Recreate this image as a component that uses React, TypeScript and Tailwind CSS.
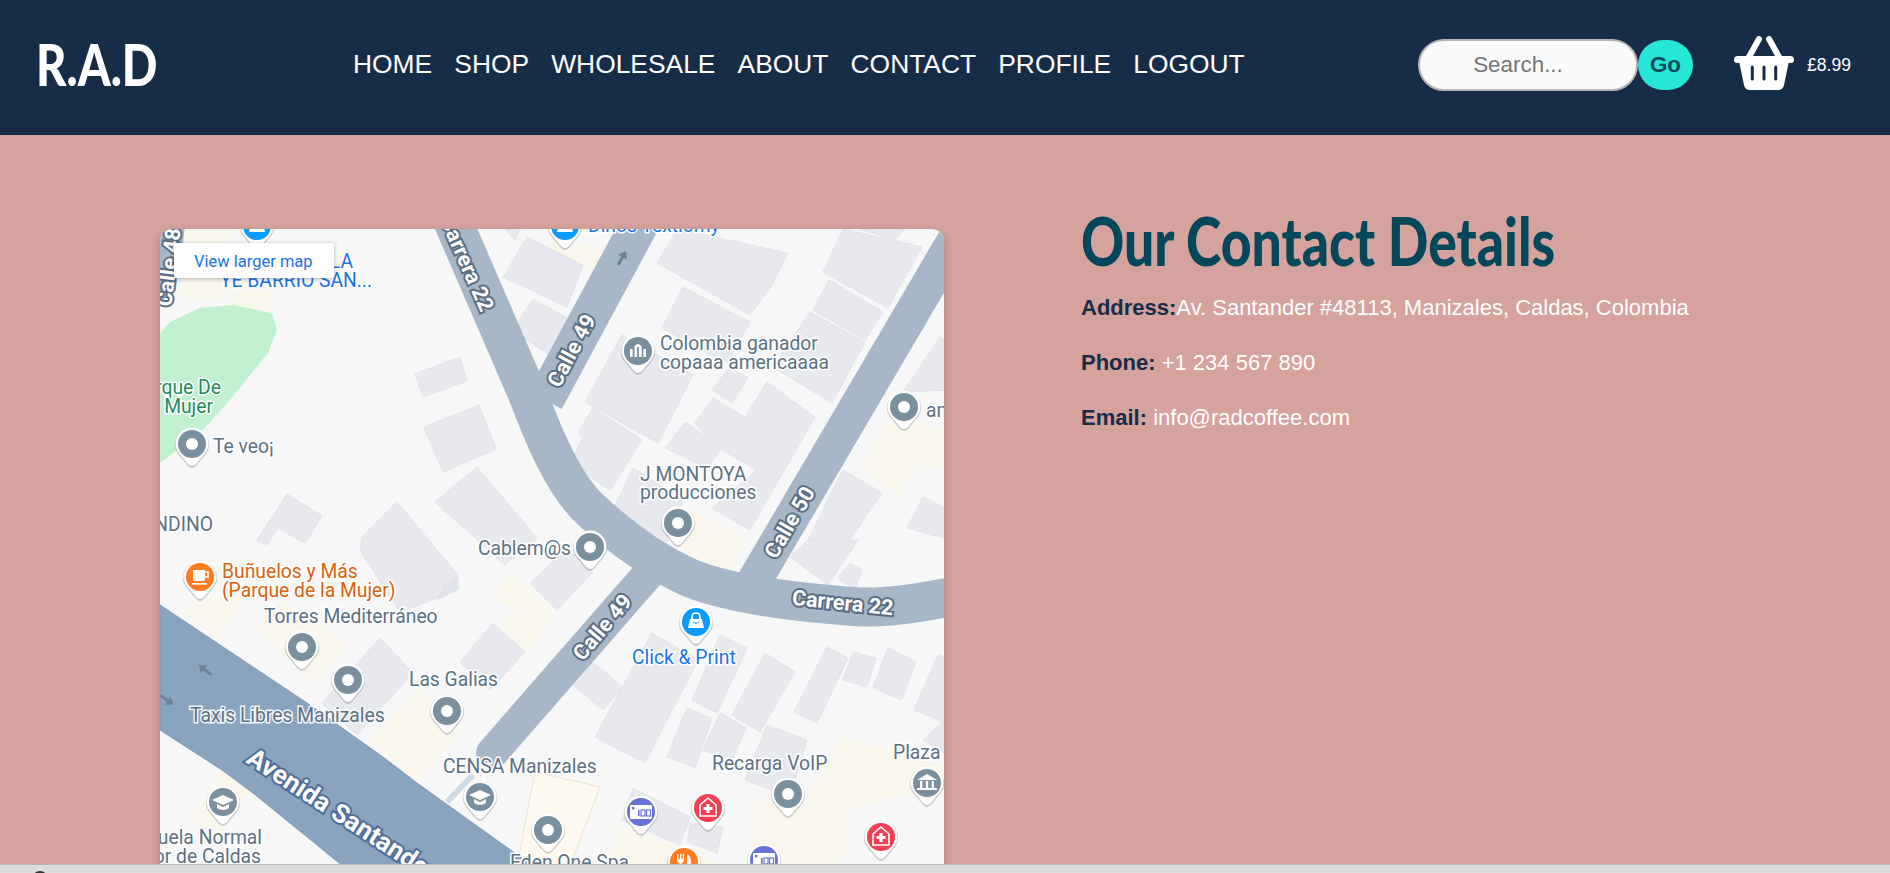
import React from "react";

const buildings: string[] = [
  "415,374 460,357 467,381 423,397",
  "424,427 479,405 496,449 443,472",
  "435,502 477,467 537,538 505,565",
  "257,540 287,494 322,516 305,543 278,528 267,545",
  "362,537 397,502 458,575 458,590 400,612 360,550",
  "503,277 527,237 583,265 567,307",
  "512,331 533,299 569,319 552,356",
  "657,263 678,229 788,253 772,285 750,315",
  "823,272 843,229 922,247 888,308",
  "662,328 683,287 750,322 727,363",
  "813,310 829,280 883,312 865,340",
  "773,367 810,312 865,342 832,403",
  "585,402 622,335 693,375 658,443",
  "712,390 730,367 748,378 732,403",
  "745,417 767,382 787,397 765,430",
  "695,423 713,398 745,417 765,430 787,397 815,417 750,530 712,508 757,470 717,447",
  "665,448 685,422 722,448 707,468",
  "578,433 593,408 642,440 610,490 570,463 583,438",
  "613,510 633,468 683,500 667,542",
  "907,528 923,497 950,510 950,540",
  "903,392 940,337 950,343 950,390",
  "803,550 843,470 882,493 843,550",
  "790,557 808,540 858,540 828,585",
  "838,578 850,563 862,570 855,590",
  "567,680 587,658 623,687 603,710",
  "595,737 652,633 698,660 645,763",
  "692,700 720,635 747,648 717,713",
  "732,715 765,653 795,672 760,732",
  "794,712 827,647 848,658 817,723",
  "843,680 853,652 876,658 867,687",
  "873,688 888,648 916,662 902,700",
  "914,710 938,655 944,657 944,722",
  "667,757 687,708 712,718 695,768",
  "703,750 720,713 746,728 732,760",
  "745,780 767,725 807,740 790,797",
  "633,788 690,817 680,845 622,820",
  "690,823 723,827 717,853 687,842",
  "923,740 944,720 944,753",
  "322,703 380,638 413,673 357,735",
  "460,662 493,623 525,652 490,690",
  "530,583 567,548 593,572 557,610",
  "505,229 520,229 515,240",
  "860,229 905,229 895,240",
];

const zones: string[] = [
  "860,470 883,427 903,417 944,433 944,460 937,470 917,463 900,495",
  "693,510 745,537 730,570 705,567 670,540",
  "550,240 612,250 602,273 550,257",
  "183,229 230,229 227,300 180,297",
  "232,290 272,290 272,315 232,316",
  "183,617 197,598 247,597 218,638",
  "255,625 283,600 348,643 313,685",
  "370,743 417,690 463,727 417,783",
  "492,597 510,573 550,607 550,623 527,652 497,623 517,610",
  "188,820 227,767 253,787 222,833",
  "617,827 643,833 720,864 610,864",
  "750,797 850,815 850,840 840,864 750,864",
  "810,793 843,737 943,767 943,797 897,795 840,812 810,807",
];

type Tone = "gray" | "green" | "orange" | "blue";
const toneClass: Record<Tone, string> = {
  gray: "fill-[#5b7183]",
  green: "fill-[#1e8a5c]",
  orange: "fill-[#d9620c]",
  blue: "fill-[#1a73e8]",
};

const labels: { t: string; x: number; y: number; tone: Tone; end?: boolean }[] = [
  { t: "Colombia ganador", x: 660, y: 350, tone: "gray" },
  { t: "copaaa americaaaa", x: 660, y: 369, tone: "gray" },
  { t: "J MONTOYA", x: 640, y: 481, tone: "gray" },
  { t: "producciones", x: 640, y: 499, tone: "gray" },
  { t: "amigos", x: 926, y: 417, tone: "gray" },
  { t: "Parque De", x: 221, y: 394, tone: "green", end: true },
  { t: "la Mujer", x: 213, y: 413, tone: "green", end: true },
  { t: "Te veo¡", x: 213, y: 453, tone: "gray" },
  { t: "ANDINO", x: 213, y: 531, tone: "gray", end: true },
  { t: "Cablem@s", x: 478, y: 555, tone: "gray" },
  { t: "Buñuelos y Más", x: 222, y: 578, tone: "orange" },
  { t: "(Parque de la Mujer)", x: 222, y: 597, tone: "orange" },
  { t: "Torres Mediterráneo", x: 264, y: 623, tone: "gray" },
  { t: "Las Galias", x: 409, y: 686, tone: "gray" },
  { t: "CENSA Manizales", x: 443, y: 773, tone: "gray" },
  { t: "Escuela Normal", x: 262, y: 844, tone: "gray", end: true },
  { t: "Superior de Caldas", x: 261, y: 863, tone: "gray", end: true },
  { t: "Eden One Spa", x: 510, y: 869, tone: "gray" },
  { t: "Click & Print", x: 632, y: 664, tone: "blue" },
  { t: "Recarga VoIP", x: 712, y: 770, tone: "gray" },
  { t: "Plaza", x: 893, y: 759, tone: "gray" },
  { t: "ESCUELA", x: 353, y: 268, tone: "blue", end: true },
  { t: "YE BARRIO SAN...", x: 220, y: 287, tone: "blue" },
  { t: "Dinos Textiomy", x: 588, y: 232, tone: "blue" },
];

const roadLabels: { t: string; x: number; y: number; a: number; anchor: "end" | "middle" }[] = [
  { t: "Carrera 22", x: 481, y: 313, a: 66, anchor: "end" },
  { t: "Calle 49", x: 578, y: 354, a: -62, anchor: "middle" },
  { t: "Calle 50", x: 796, y: 526, a: -60, anchor: "middle" },
  { t: "Calle 49", x: 608, y: 632, a: -50, anchor: "middle" },
  { t: "Carrera 22", x: 842, y: 610, a: 6, anchor: "middle" },
  { t: "Calle 48", x: 176, y: 268, a: -83, anchor: "middle" },
];

type Kind = "dot" | "museum" | "cup" | "grad" | "bank" | "bag" | "hospital" | "cash" | "food";
const pins: { x: number; y: number; kind: Kind; fill: string }[] = [
  { x: 192, y: 444, kind: "dot", fill: "#7a909e" },
  { x: 638, y: 351, kind: "museum", fill: "#7a909e" },
  { x: 904, y: 407, kind: "dot", fill: "#7a909e" },
  { x: 678, y: 523, kind: "dot", fill: "#7a909e" },
  { x: 590, y: 547, kind: "dot", fill: "#7a909e" },
  { x: 200, y: 577, kind: "cup", fill: "#ff7c1f" },
  { x: 302, y: 647, kind: "dot", fill: "#7a909e" },
  { x: 348, y: 680, kind: "dot", fill: "#7a909e" },
  { x: 447, y: 711, kind: "dot", fill: "#7a909e" },
  { x: 223, y: 802, kind: "grad", fill: "#7a909e" },
  { x: 480, y: 797, kind: "grad", fill: "#7a909e" },
  { x: 548, y: 830, kind: "dot", fill: "#7a909e" },
  { x: 696, y: 622, kind: "bag", fill: "#0a9bff" },
  { x: 788, y: 794, kind: "dot", fill: "#7a909e" },
  { x: 927, y: 783, kind: "bank", fill: "#7a909e" },
  { x: 708, y: 808, kind: "hospital", fill: "#f23f52" },
  { x: 881, y: 837, kind: "hospital", fill: "#f23f52" },
  { x: 641, y: 812, kind: "cash", fill: "#6772d6" },
  { x: 764, y: 860, kind: "cash", fill: "#6772d6" },
  { x: 684, y: 862, kind: "food", fill: "#ff7c1f" },
  { x: 257, y: 226, kind: "bag", fill: "#0a9bff" },
  { x: 565, y: 226, kind: "bag", fill: "#0a9bff" },
];

function PinIcon({ kind, fill }: { kind: Kind; fill: string }) {
  switch (kind) {
    case "dot":
      return <circle r="6" fill="#fff" />;
    case "museum":
      return (
        <g fill="#fff">
          <rect x="-8" y="-2" width="2.6" height="8" />
          <rect x="-3.5" y="-4" width="2.6" height="10" />
          <rect x="1" y="-4" width="2.6" height="10" />
          <rect x="5.4" y="-2" width="2.6" height="8" />
          <path d="M-4 -4 Q0 -10 4 -4Z" />
        </g>
      );
    case "cup":
      return (
        <g>
          <path d="M-7 -7 H5 V2 Q5 4 3 4 H-5 Q-7 4 -7 2Z" fill="#fff" />
          <path d="M5 -5 H8 V0 H5" fill="none" stroke="#fff" strokeWidth="1.6" />
          <rect x="-8" y="6" width="15" height="1.6" fill="#fff" />
        </g>
      );
    case "grad":
      return (
        <g>
          <path d="M-11 -2 L0 -7 L11 -2 L0 3Z" fill="#fff" />
          <path d="M-6 2 L0 5 L6 2 V6 Q0 10 -6 6Z" fill="#fff" />
        </g>
      );
    case "bank":
      return (
        <g fill="#fff">
          <path d="M-10 -3 L0 -9 L10 -3Z" />
          <rect x="-7" y="-2" width="2.4" height="7" />
          <rect x="-1.2" y="-2" width="2.4" height="7" />
          <rect x="4.6" y="-2" width="2.4" height="7" />
          <rect x="-10" y="5" width="20" height="2" />
        </g>
      );
    case "bag":
      return (
        <g>
          <path d="M-4 -3 V-5 Q-4 -9 0 -9 Q4 -9 4 -5 V-3" fill="none" stroke="#fff" strokeWidth="1.6" />
          <path d="M-6 -3 H6 L8 6 H-8Z" fill="#fff" />
          <path d="M-3 0 Q0 3 3 0" fill="none" stroke={fill} strokeWidth="1" />
        </g>
      );
    case "hospital":
      return (
        <g>
          <path d="M-8 -3 L0 -10 L8 -3 V8 H-8Z" fill="none" stroke="#fff" strokeWidth="1.6" />
          <path d="M-1.6 -4 H1.6 V-1 H4.5 V2 H1.6 V5 H-1.6 V2 H-4.5 V-1 H-1.6Z" fill="#fff" />
        </g>
      );
    case "cash":
      return (
        <g>
          <rect x="-11" y="-7" width="22" height="14" rx="1" fill="#fff" />
          <rect x="-9" y="-5" width="2.4" height="2.4" fill={fill} />
          <rect x="-3" y="-2" width="1.6" height="6" fill={fill} />
          <rect x="0" y="-2" width="4" height="6" fill="none" stroke={fill} strokeWidth="1.2" />
          <rect x="5.5" y="-2" width="4" height="6" fill="none" stroke={fill} strokeWidth="1.2" />
        </g>
      );
    case "food":
      return (
        <g fill="#fff">
          <path d="M-7 -8 V-2 Q-7 1 -4.5 1 V9 H-2.5 V1 Q0 1 0 -2 V-8 H-1.2 V-3 H-2.6 V-8 H-4 V-3 H-5.6 V-8Z" />
          <path d="M3 9 V-8 Q8 -5 7 2 H5 V9Z" />
        </g>
      );
  }
}

const PIN_SHAPE = "M-16.5 0 A16.5 16.5 0 1 1 16.5 0 C16.5 7 11 11 4 20 Q0 24 -4 20 C-11 11 -16.5 7 -16.5 0Z";

function Pin({ x, y, kind, fill }: { x: number; y: number; kind: Kind; fill: string }) {
  return (
    <g transform={`translate(${x} ${y})`}>
      <path d={PIN_SHAPE} fill="#4a5560" opacity="0.28" transform="translate(0 1) scale(1.04)" />
      <path d={PIN_SHAPE} fill="#fff" />
      <circle r="14" fill={fill} />
      <PinIcon kind={kind} fill={fill} />
    </g>
  );
}

function RoadArrow({ x, y, a }: { x: number; y: number; a: number }) {
  return (
    <path
      transform={`translate(${x} ${y}) rotate(${a})`}
      d="M-1.5 8 V-1 H-5 L0 -8 L5 -1 H1.5 V8Z"
      fill="#6f8398"
    />
  );
}

function MapDrawing() {
  return (
    <svg viewBox="160 229 784 640" width="784" height="640" className="block bg-[#f7f7f8] font-['Roboto',sans-serif]">
      {zones.map((p) => (
        <polygon key={p} points={p} fill="#f9f6ec" />
      ))}
      <polygon points="535,772 600,787 570,866 517,866" fill="#fdf9ef" stroke="#efe3d0" />
      <polygon
        points="160,333 170,322 200,308 233,305 272,313 277,330 268,353 230,400 200,433 160,463"
        fill="#c1f0d0"
      />
      {buildings.map((p) => (
        <polygon key={p} points={p} fill="#e8e9ee" stroke="#e2e4ea" strokeWidth="1" />
      ))}
      <polygon points="445,583 458,575 458,590 437,600" fill="#e0e3ea" />
      <g fill="none" stroke="#a7b7c8" strokeLinejoin="round">
        <path
          d="M448 210 L528 395 C545 440 565 487 592 511 C620 537 650 560 690 578 C720 590 770 601 860 607 C890 608 920 603 950 597"
          strokeWidth="39"
        />
        <path d="M650 205 L545 400" strokeWidth="38" />
        <path d="M650 572 L492 753" strokeWidth="32" strokeLinecap="round" />
        <path d="M990 180 L745 597" strokeWidth="35" />
        <path d="M170 215 C170 260 155 290 130 325" strokeWidth="30" />
      </g>
      <path d="M447 802 L473 775" stroke="#cfdbe4" strokeWidth="6" fill="none" />
      <polygon
        points="160,605 307,703 383,757 417,783 530,864 545,880 360,880 253,793 222,770 160,730"
        fill="#8aa4bf"
        stroke="#7f9ab6"
      />
      <RoadArrow x={622} y={258} a={30} />
      <RoadArrow x={205} y={670} a={-52} />
      <RoadArrow x={167} y={700} a={125} />

      {roadLabels.map((r) => (
        <text
          key={r.t + r.x}
          transform={`translate(${r.x} ${r.y}) rotate(${r.a})`}
          textAnchor={r.anchor}
          className="fill-white stroke-[#5a6d83] stroke-[4px] text-[21.5px] font-bold [paint-order:stroke]"
        >
          {r.t}
        </text>
      ))}
      <text
        transform="translate(245 762) rotate(33)"
        className="fill-white stroke-[#4f6d97] stroke-[4px] text-[26px] font-bold [paint-order:stroke]"
      >
        Avenida Santander
      </text>

      {pins.map((p) => (
        <Pin key={`${p.x}-${p.y}`} {...p} />
      ))}

      <text x={190} y={722} className="fill-[#5b7183] stroke-[#f4f6f9] stroke-[3px] text-[19.3px] [paint-order:stroke]">
        Taxis Libres Manizales
      </text>
      {labels.map((l) => (
        <text
          key={l.t}
          x={l.x}
          y={l.y}
          textAnchor={l.end ? "end" : "start"}
          className={`${toneClass[l.tone]} stroke-white stroke-[3px] text-[19.3px] [paint-order:stroke]`}
        >
          {l.t}
        </text>
      ))}
    </svg>
  );
}

function Basket() {
  return (
    <svg width="60" height="54" viewBox="0 0 60 54" className="-mt-[10px] shrink-0">
      <path d="M15 21 L25 3 M45 21 L35 3" stroke="#fff" strokeWidth="6" strokeLinecap="round" fill="none" />
      <rect x="0" y="20" width="60" height="7" rx="3.5" fill="#fff" />
      <path d="M5 25 H55 L50 49 Q49 54 44 54 H16 Q11 54 10 49Z" fill="#fff" />
      <path d="M18.3 31 V43 M30 31 V43 M41.7 31 V43" stroke="#172c47" strokeWidth="3" strokeLinecap="round" fill="none" />
    </svg>
  );
}

const nav = ["HOME", "SHOP", "WHOLESALE", "ABOUT", "CONTACT", "PROFILE", "LOGOUT"];

export default function App() {
  return (
    <div className="relative h-screen overflow-hidden bg-[#d5a29d] font-['Liberation_Sans',Arial,sans-serif]">
      <header className="flex h-[135px] items-center bg-[#172c47]">
        <div className="ml-[36px] -mt-[8px] w-[317px] shrink-0 origin-left scale-x-[0.81] font-['Lato',sans-serif] text-[58px] font-black leading-none text-white">
          R.A.D
        </div>
        <nav className="-mt-[6px] flex w-[1065px] shrink-0 items-center gap-[22.1px] text-[26.4px] text-white">
          {nav.map((n) => (
            <span key={n}>{n}</span>
          ))}
        </nav>
        <div className="-mt-[6px] flex items-center">
          <div className="flex h-[52px] w-[220px] items-center justify-center rounded-full border-2 border-[#b5b5b5] bg-[#f8fafc] pr-[20px] text-[22.4px] text-[#757575]">
            Search...
          </div>
          <div className="flex h-[50px] w-[55px] items-center justify-center rounded-full bg-[#26e6d5] text-[22.4px] font-bold text-[#064a5c]">
            Go
          </div>
        </div>
        <div className="ml-[41px] flex items-center gap-[13px]">
          <Basket />
          <span className="-mt-[5px] text-[17.6px] text-white">£8.99</span>
        </div>
      </header>

      <main className="flex items-start pl-[160px] pt-[70px]">
        <div className="relative mt-[24px] h-[650px] w-[784px] shrink-0 overflow-hidden rounded-[12px] shadow-[0_4px_10px_rgba(0,0,0,0.22)]">
          <MapDrawing />
          <div className="absolute left-[14px] top-[14px] flex h-[35px] w-[160px] items-center rounded-[2px] bg-white pl-[20px] pt-[3px] font-['Roboto',sans-serif] text-[16.5px] text-[#1a73e8] shadow-[0_1px_4px_rgba(0,0,0,0.3)]">
            View larger map
          </div>
        </div>
        <section className="ml-[137px]">
          <h1 className="origin-left scale-x-[0.81] whitespace-nowrap font-['Lato',sans-serif] text-[66px] font-black leading-[72px] text-[#03485a]">
            Our Contact Details
          </h1>
          <div className="mt-[18px] flex flex-col gap-[30px] text-[22px] leading-[25px] text-white">
            <p>
              <strong className="text-[#172c47]">Address:</strong>Av. Santander #48113, Manizales, Caldas, Colombia
            </p>
            <p>
              <strong className="text-[#172c47]">Phone:</strong> +1 234 567 890
            </p>
            <p>
              <strong className="text-[#172c47]">Email:</strong> info@radcoffee.com
            </p>
          </div>
        </section>
      </main>

      <div className="fixed inset-x-0 bottom-0 h-[9px] overflow-hidden border-t border-[#b8b8b8] bg-[#dcdcdc]">
        <span className="absolute left-[32px] top-[6px] h-[16px] w-[16px] rounded-full border-2 border-[#333] bg-[#cf2a2a]" />
      </div>
    </div>
  );
}
